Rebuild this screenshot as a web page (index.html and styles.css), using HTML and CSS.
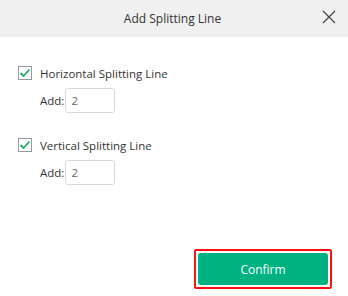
FILE: index.html
```html
<!DOCTYPE html>
<html>
<head>
<meta charset="utf-8">
<link rel="stylesheet" href="styles.css">
</head>
<body>
<div class="dialog">
  <div class="header">
    <span class="title">Add Splitting Line</span>
    <svg class="close" width="14" height="14" viewBox="0 0 14 14"><path d="M1 1 L13 13 M13 1 L1 13" stroke="#444" stroke-width="1.2" fill="none"/></svg>
  </div>
  <div class="body">
    <div class="group">
      <label class="check-row">
        <span class="checkbox"><svg width="12" height="10" viewBox="0 0 12 10"><path d="M1.5 5 L4.5 8 L10.5 1.5" stroke="#19b26b" stroke-width="1.8" fill="none"/></svg></span>
        <span class="label">Horizontal Splitting Line</span>
      </label>
      <div class="add-row"><span class="add">Add:</span><span class="input">2</span></div>
    </div>
    <div class="group">
      <label class="check-row">
        <span class="checkbox"><svg width="12" height="10" viewBox="0 0 12 10"><path d="M1.5 5 L4.5 8 L10.5 1.5" stroke="#19b26b" stroke-width="1.8" fill="none"/></svg></span>
        <span class="label">Vertical Splitting Line</span>
      </label>
      <div class="add-row"><span class="add">Add:</span><span class="input">2</span></div>
    </div>
  </div>
  <div class="footer">
    <div class="highlight"><button class="confirm">Confirm</button></div>
  </div>
</div>
</body>
</html>
```

FILE: styles.css
```css
html, body {
  margin: 0;
  padding: 0;
  background: #fff;
}
.dialog {
  width: 348px;
  height: 296px;
  display: flex;
  flex-direction: column;
  font-family: "Open Sans", "Noto Sans", sans-serif;
  font-size: 11.5px;
  color: #333;
}
.header {
  height: 37px;
  background: #f0f0f0;
  display: flex;
  align-items: center;
  justify-content: center;
  position: relative;
}
.title {
  font-size: 12px;
  color: #333;
  margin-left: -3px;
}
.close {
  position: absolute;
  right: 12px;
  top: 10px;
}
.body {
  padding: 29px 0 0 18px;
  display: flex;
  flex-direction: column;
  gap: 25px;
  flex: 1;
}
.group {
  display: flex;
  flex-direction: column;
  gap: 8px;
}
.check-row {
  display: flex;
  align-items: center;
  gap: 8px;
  height: 14px;
}
.checkbox {
  width: 14px;
  height: 14px;
  box-sizing: border-box;
  border: 1px solid #999;
  display: flex;
  align-items: center;
  justify-content: center;
}
.add-row {
  display: flex;
  align-items: center;
  padding-left: 22px;
  gap: 1px;
}
.input {
  width: 50px;
  height: 25px;
  box-sizing: border-box;
  border: 1px solid #d9d9d9;
  border-radius: 3px;
  padding-left: 5px;
  line-height: 23px;
  color: #666;
}
.footer {
  display: flex;
  justify-content: flex-end;
  padding: 0 16px 7px 0;
}
.highlight {
  border: 2px solid #f11;
  border-radius: 2px;
  padding: 2px;
}
.confirm {
  display: block;
  width: 130px;
  height: 32px;
  border: none;
  border-radius: 3px;
  background: #00b182;
  color: #fff;
  font-family: "Open Sans", "Noto Sans", sans-serif;
  font-size: 12px;
}
```
